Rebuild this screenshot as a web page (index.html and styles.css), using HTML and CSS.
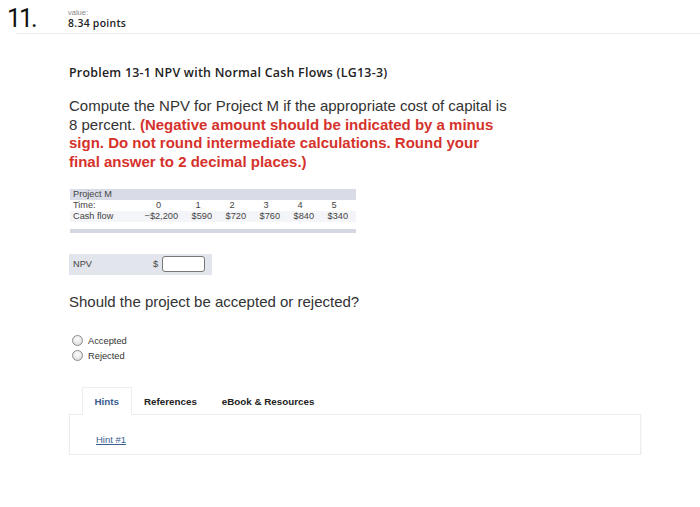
FILE: index.html
```html
<!DOCTYPE html>
<html>
<head>
<meta charset="utf-8">
<link rel="stylesheet" href="styles.css">
</head>
<body>
<div class="qhead">
  <div class="qnum">11.</div>
  <div class="qmeta">
    <div class="qval-label">value:</div>
    <div class="qval">8.34 points</div>
  </div>
</div>
<div class="rule"></div>
<div class="content">
  <h2 class="ptitle">Problem 13-1 NPV with Normal Cash Flows (LG13-3)</h2>
  <p class="prompt">Compute the NPV for Project M if the appropriate cost of capital is 8 percent. <strong class="warn">(Negative amount should be indicated by a minus sign. Do not round intermediate calculations. Round your final answer to 2 decimal places.)</strong></p>

  <div class="cf-table">
    <div class="cf-row cf-band"><span class="cf-label">Project M</span></div>
    <div class="cf-row">
      <span class="cf-label">Time:</span>
      <span class="cf-h">0</span><span class="cf-h">1</span><span class="cf-h">2</span><span class="cf-h">3</span><span class="cf-h">4</span><span class="cf-h">5</span>
    </div>
    <div class="cf-row cf-alt">
      <span class="cf-label">Cash flow</span>
      <span class="cf-v">&minus;$2,200</span><span class="cf-v">$590</span><span class="cf-v">$720</span><span class="cf-v">$760</span><span class="cf-v">$840</span><span class="cf-v">$340</span>
    </div>
    <div class="cf-foot"></div>
  </div>

  <div class="npv">
    <span class="npv-label">NPV</span>
    <span class="npv-cur">$</span>
    <span class="npv-input"></span>
  </div>

  <p class="question">Should the project be accepted or rejected?</p>

  <div class="choices">
    <label class="choice"><span class="radio"></span>Accepted</label>
    <label class="choice"><span class="radio"></span>Rejected</label>
  </div>

  <div class="tabs">
    <div class="tab active">Hints</div>
    <div class="tab">References</div>
    <div class="tab">eBook &amp; Resources</div>
  </div>
  <div class="panel">
    <a class="hint" href="#">Hint #1</a>
  </div>
</div>
</body>
</html>
```

FILE: styles.css
```css
html, body {
  margin: 0;
  padding: 0;
  background: #fff;
}
body {
  font-family: "Liberation Sans", Arial, sans-serif;
  color: #222;
}
.qhead {
  display: flex;
  align-items: flex-start;
  height: 33px;
}
.qnum {
  width: 61px;
  padding-left: 7px;
  padding-top: 5px;
  font-family: Roboto, sans-serif;
  font-weight: 400;
  font-size: 25px;
  line-height: 28px;
  letter-spacing: -2px;
  color: #111;
}
.qmeta {
  padding-top: 8px;
}
.qval-label {
  font-size: 7.5px;
  line-height: 9px;
  color: #888;
}
.qval {
  font-family: "Open Sans", sans-serif;
  font-weight: 600;
  font-size: 10.4px;
  line-height: 13px;
  letter-spacing: 0.3px;
  color: #222;
}
.rule {
  margin-left: 16px;
  border-top: 1px solid #ebebeb;
}
.content {
  padding-left: 69px;
}
.ptitle {
  margin: 31px 0 0;
  font-family: "Open Sans", sans-serif;
  font-weight: 600;
  font-size: 12.4px;
  line-height: 16px;
  letter-spacing: 0.25px;
  color: #222;
}
.prompt {
  margin: 16px 0 0;
  width: 442px;
  font-size: 15px;
  line-height: 18.7px;
  color: #333;
}
.warn {
  color: #d5322c;
}
.cf-table {
  margin-top: 17px;
  margin-left: 1px;
  width: 286px;
  font-size: 9.2px;
  color: #444;
}
.cf-row {
  display: grid;
  grid-template-columns: 66px 45px repeat(5, 34px);
  height: 11px;
  line-height: 11px;
}
.cf-band {
  background: #d9dce6;
}
.cf-alt {
  background: #f4f5f8;
}
.cf-label {
  padding-left: 3px;
}
.cf-h {
  text-align: center;
}
.cf-v {
  text-align: right;
  padding-right: 3px;
}
.cf-foot {
  margin-top: 7px;
  height: 4px;
  background: #d4d7e0;
}
.npv {
  margin-top: 21px;
  width: 143px;
  height: 21px;
  background: #e3e5ec;
  display: flex;
  align-items: center;
  font-size: 9.2px;
  color: #444;
}
.npv-label {
  padding-left: 4px;
  width: 80px;
}
.npv-cur {
  width: 9px;
}
.npv-input {
  width: 43px;
  height: 16px;
  border: 1px solid #777;
  border-radius: 3px;
  background: #fff;
  box-sizing: border-box;
}
.question {
  margin: 18px 0 0;
  font-size: 15px;
  line-height: 18px;
  color: #333;
}
.choices {
  margin-top: 24px;
  margin-left: 3px;
  display: flex;
  flex-direction: column;
  gap: 3px;
}
.choice {
  display: flex;
  align-items: center;
  gap: 5px;
  height: 12px;
  font-size: 9.3px;
  color: #333;
}
.radio {
  width: 11px;
  height: 11px;
  border-radius: 50%;
  border: 1px solid #8c8c8c;
  box-sizing: border-box;
  background: radial-gradient(circle at 50% 35%, #fdfdfd 0%, #e6e6e6 60%, #cfcfcf 100%);
}
.tabs {
  margin-top: 25px;
  padding-left: 13px;
  display: flex;
  align-items: flex-end;
  position: relative;
  z-index: 1;
  margin-bottom: -1px;
}
.tab {
  padding: 0 11.5px;
  height: 27px;
  line-height: 27px;
  font-size: 9.8px;
  font-weight: bold;
  color: #222;
  border: 1px solid transparent;
  border-bottom: none;
}
.tab.active {
  color: #3b5d8f;
  background: #fff;
  border-color: #eeeeee;
}
.panel {
  width: 572px;
  height: 41px;
  border: 1px solid #ececec;
  box-shadow: 0 1px 2px rgba(0, 0, 0, 0.06);
  padding-left: 26px;
  box-sizing: border-box;
  padding-top: 14px;
}
.hint {
  font-size: 9.5px;
  color: #3b5d8f;
  text-decoration: underline;
}
```
